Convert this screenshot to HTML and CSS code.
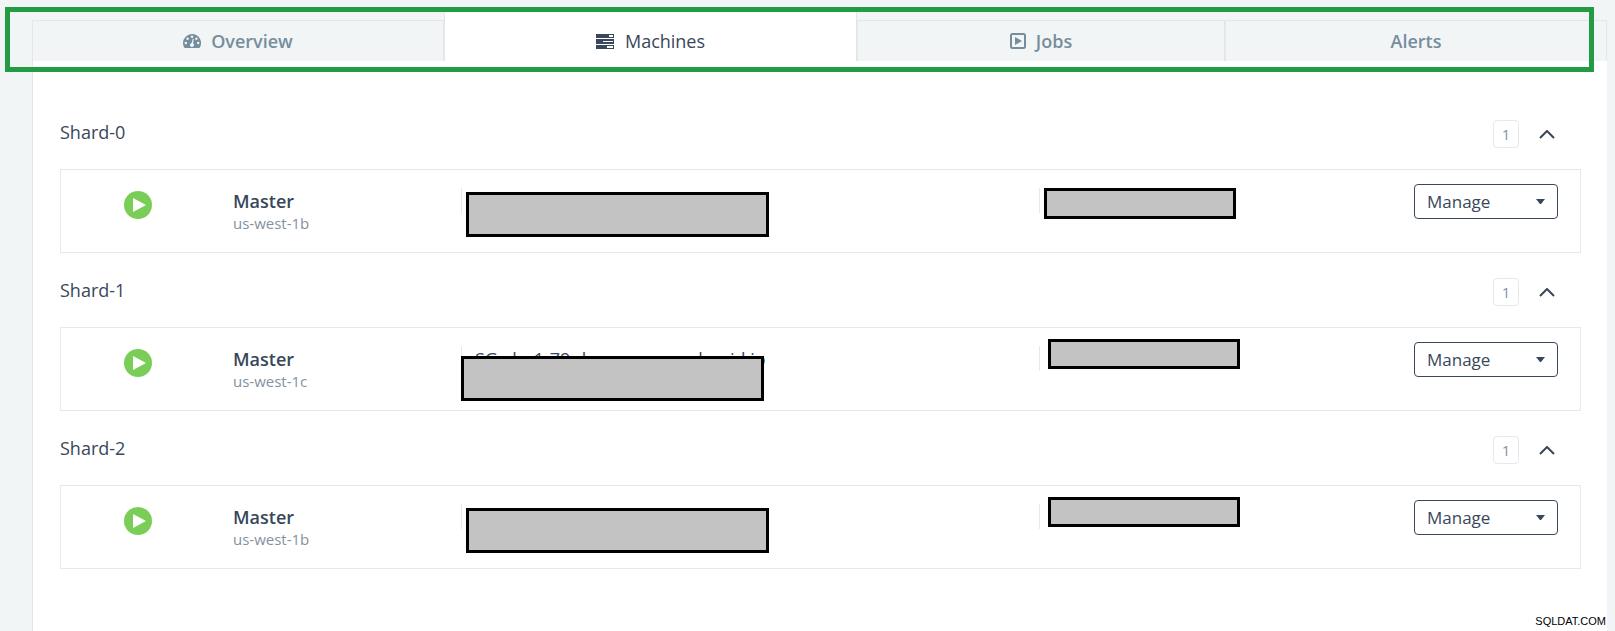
FILE: index.html
```
<!DOCTYPE html>
<html lang="en">
    <head>
        <meta charset="utf-8" />
        <title>Machines</title>
        <meta name="viewport" content="width=device-width" />
        <link rel="stylesheet" href="styles.css">
    </head>
    <body>
        <nav class="tabs">
            <a class="tab" href="#overview">
                <svg class="tab-icon" viewBox="0 0 18 14" width="18" height="14">
                    <path fill="currentColor" d="M9 0a9 9 0 0 0-9 9c0 1.700.4 3.200 1.200 4.500.2.300.5.500.8.500h14c.3 0 .6-.2.800-.5A9 9 0 0 0 9 0z" />
                    <g fill="#f2f5f6">
                        <circle cx="2.800" cy="9" r="1.200" />
                        <circle cx="4.600" cy="4.700" r="1.200" />
                        <circle cx="9" cy="2.800" r="1.200" />
                        <circle cx="13.400" cy="4.700" r="1.200" />
                        <circle cx="15.200" cy="9" r="1.200" />
                        <path d="M9.800 4.800l1 .2-.8 4.200a2 2 0 1 1-1.400-.2z" />
                    </g>
                </svg>
                Overview
            </a>
            <a class="tab active" href="#machines">
                <svg class="tab-icon" viewBox="0 0 18 15" width="18" height="15">
                    <path fill="currentColor" d="M0 0h18v4H0zM0 5h18v5H0zM0 11h18v4H0z" />
                    <path fill="#fff" d="M13 1h4v2h-4zM7 7h10v1H7zM11 12h6v2h-6z" />
                </svg>
                Machines
            </a>
            <a class="tab" href="#jobs">
                <svg class="tab-icon" viewBox="0 0 16 16" width="16" height="16">
                    <rect x="1" y="1" width="14" height="14" rx="1.500" fill="none" stroke="currentColor" stroke-width="2" />
                    <path fill="currentColor" d="M5 4l7 4-7 4z" />
                </svg>
                Jobs
            </a>
            <a class="tab" href="#alerts">Alerts</a>
        </nav>

        <main class="panel">
            <section>
                <header class="shard-header">
                    <h2>Shard-0</h2>
                    <span class="count">1</span>
                    <button class="toggle" type="button" aria-label="Collapse Shard-0">
                        <svg viewBox="0 0 16 9" width="16" height="9"><path d="M1 8l7-7 7 7" /></svg>
                    </button>
                </header>
                <div class="machine">
                    <div class="status">
                        <svg viewBox="0 0 28 28" width="28" height="28"><circle cx="14" cy="14" r="14" /><path d="M9 7l13 7-13 7z" /></svg>
                    </div>
                    <div class="role">
                        <strong>Master</strong>
                        <span>us-west-1b</span>
                    </div>
                    <div class="cell">
                        <div class="mask host"></div>
                    </div>
                    <div class="cell">
                        <div class="mask address"></div>
                    </div>
                    <select class="manage" aria-label="Manage Shard-0 master">
                        <option>Manage</option>
                    </select>
                </div>
            </section>

            <section>
                <header class="shard-header">
                    <h2>Shard-1</h2>
                    <span class="count">1</span>
                    <button class="toggle" type="button" aria-label="Collapse Shard-1">
                        <svg viewBox="0 0 16 9" width="16" height="9"><path d="M1 8l7-7 7 7" /></svg>
                    </button>
                </header>
                <div class="machine">
                    <div class="status">
                        <svg viewBox="0 0 28 28" width="28" height="28"><circle cx="14" cy="14" r="14" /><path d="M9 7l13 7-13 7z" /></svg>
                    </div>
                    <div class="role">
                        <strong>Master</strong>
                        <span>us-west-1c</span>
                    </div>
                    <div class="cell">
                        SG-clu-1-79.devservers.scalegrid.io
                        <div class="mask host host-low"></div>
                    </div>
                    <div class="cell">
                        <div class="mask address address-high"></div>
                    </div>
                    <select class="manage" aria-label="Manage Shard-1 master">
                        <option>Manage</option>
                    </select>
                </div>
            </section>

            <section>
                <header class="shard-header">
                    <h2>Shard-2</h2>
                    <span class="count">1</span>
                    <button class="toggle" type="button" aria-label="Collapse Shard-2">
                        <svg viewBox="0 0 16 9" width="16" height="9"><path d="M1 8l7-7 7 7" /></svg>
                    </button>
                </header>
                <div class="machine">
                    <div class="status">
                        <svg viewBox="0 0 28 28" width="28" height="28"><circle cx="14" cy="14" r="14" /><path d="M9 7l13 7-13 7z" /></svg>
                    </div>
                    <div class="role">
                        <strong>Master</strong>
                        <span>us-west-1b</span>
                    </div>
                    <div class="cell">
                        <div class="mask host"></div>
                    </div>
                    <div class="cell">
                        <div class="mask address address-high"></div>
                    </div>
                    <select class="manage" aria-label="Manage Shard-2 master">
                        <option>Manage</option>
                    </select>
                </div>
            </section>
        </main>

        <div class="highlight"></div>
        <div class="watermark">SQLDAT.COM</div>
    </body>
</html>
```
FILE: styles.css
```
* {
    box-sizing: border-box;
}

body {
    display: flex;
    flex-direction: column;
    min-height: 100vh;
    margin: 0;
    padding: 12px 8px 0 32px;
    color: #38475a;
    background: #f2f5f6;
    font-family: "Open Sans", sans-serif;
    font-size: 16px;
}

.tabs {
    display: grid;
    grid-template-columns: 412fr 413fr 368fr 382fr;
    align-items: end;
}

.tab {
    display: flex;
    align-items: center;
    justify-content: center;
    gap: 10px;
    height: 41px;
    border: 1px solid #e3e7e9;
    border-width: 1px 1px 0;
    color: #768d9d;
    font-size: 18px;
    font-weight: 600;
    text-decoration: none;
}

.tab.active {
    gap: 11px;
    height: 49px;
    padding-top: 9px;
    border-top: 0;
    color: #38475a;
    background: #fff;
    font-weight: 500;
}

.panel {
    flex: 1;
    padding: 34px 26px 0 27px;
    border-left: 1px solid #e3e7e9;
    background: #fff;
}

.shard-header {
    display: flex;
    align-items: center;
    padding: 25px 26px 21px 0;
}

.shard-header h2 {
    flex: 1;
    margin: 0;
    padding-bottom: 4px;
    font-size: 18px;
    font-weight: 500;
    line-height: 24px;
}

.count {
    width: 26px;
    height: 28px;
    border: 1px solid #e6e8ea;
    border-radius: 4px;
    color: #8492a6;
    font-size: 15px;
    line-height: 26px;
    text-align: center;
}

.toggle {
    display: flex;
    margin-left: 20px;
    padding: 0;
    border: 0;
    background: none;
}

.toggle path {
    fill: none;
    stroke: #38475a;
    stroke-width: 2;
}

.machine {
    display: grid;
    grid-template-columns: 172fr 228fr 578fr 375fr 144fr;
    height: 84px;
    padding-right: 22px;
    border: 1px solid #e6e8ea;
}

.status {
    padding: 21px 0 0 63px;
}

.status circle {
    fill: #7ace57;
}

.status path {
    fill: #fff;
}

.role {
    padding-top: 20px;
}

.role strong,
.role span {
    display: block;
    line-height: 22px;
}

.role strong {
    font-size: 18px;
    font-weight: 600;
}

.role span {
    color: #8492a0;
    font-size: 15px;
}

.cell {
    position: relative;
    padding: 19px 0 0 14px;
    font-size: 18px;
    font-weight: 500;
    line-height: 24px;
}

.cell::before {
    content: "";
    position: absolute;
    top: 18px;
    left: 0;
    height: 25px;
    border-left: 1px solid #e6e8ea;
}

/* boxes that cover host names and addresses */
.mask {
    position: absolute;
    border: 3px solid #000;
    background: #c3c3c3;
}

.host {
    top: 22px;
    left: 5px;
    width: 303px;
    height: 45px;
}

.host-low {
    top: 28px;
    left: 0;
}

.address {
    top: 18px;
    left: 5px;
    width: 192px;
    height: 31px;
}

.address-high {
    top: 11px;
    left: 9px;
    height: 30px;
}

.manage {
    height: 35px;
    margin-top: 14px;
    padding: 0 12px;
    border: 1px solid #38475a;
    border-radius: 4px;
    appearance: none;
    color: #38475a;
    background: #fff url("data:image/svg+xml,%3Csvg xmlns='http://www.w3.org/2000/svg' viewBox='0 0 9 5'%3E%3Cpath fill='%2338475a' d='M0 0h9L5 5H4z'/%3E%3C/svg%3E") no-repeat right 12px center / 9px 5px;
    font-family: inherit;
    font-size: 17px;
}

.highlight {
    position: absolute;
    top: 7px;
    left: 5px;
    right: 21px;
    height: 65px;
    border: 5px solid #239b42;
    pointer-events: none;
}

.watermark {
    position: absolute;
    right: 9px;
    bottom: 2px;
    color: #000;
    font: 11px/16px "Liberation Sans", Arial, sans-serif;
}
```
